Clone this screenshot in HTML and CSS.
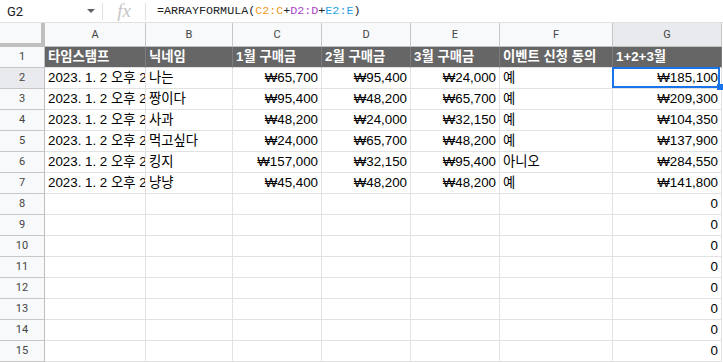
FILE: index.html
```html
<!DOCTYPE html>
<html>
<head>
  <title>Sheet</title>
  <link rel="stylesheet" href="styles.css">
</head>
<body>

  <div class="formula-bar">
    <div class="name-box"><span>G2</span><span class="caret"></span></div>
    <div class="sep"></div>
    <div class="fx">fx</div>
    <div class="sep"></div>
    <div class="formula">=ARRAYFORMULA(<span class="r1">C2:C</span>+<span class="r2">D2:D</span>+<span class="r3">E2:E</span>)</div>
  </div>

  <div class="sheet">
    <div class="corner"></div>
    <div class="col-head">A</div>
    <div class="col-head">B</div>
    <div class="col-head">C</div>
    <div class="col-head">D</div>
    <div class="col-head">E</div>
    <div class="col-head">F</div>
    <div class="col-head active">G</div>

    <div class="row-head">1</div>
    <div class="cell title">타임스탬프</div>
    <div class="cell title">닉네임</div>
    <div class="cell title">1월 구매금</div>
    <div class="cell title">2월 구매금</div>
    <div class="cell title">3월 구매금</div>
    <div class="cell title">이벤트 신청 동의</div>
    <div class="cell title">1+2+3월</div>

    <div class="row-head active">2</div>
    <div class="cell">2023. 1. 2 오후 2:10:21</div>
    <div class="cell">나는</div>
    <div class="cell num">₩65,700</div>
    <div class="cell num">₩95,400</div>
    <div class="cell num">₩24,000</div>
    <div class="cell">예</div>
    <div class="cell num selected">₩185,100</div>

    <div class="row-head">3</div>
    <div class="cell">2023. 1. 2 오후 2:11:05</div>
    <div class="cell">짱이다</div>
    <div class="cell num">₩95,400</div>
    <div class="cell num">₩48,200</div>
    <div class="cell num">₩65,700</div>
    <div class="cell">예</div>
    <div class="cell num">₩209,300</div>

    <div class="row-head">4</div>
    <div class="cell">2023. 1. 2 오후 2:11:48</div>
    <div class="cell">사과</div>
    <div class="cell num">₩48,200</div>
    <div class="cell num">₩24,000</div>
    <div class="cell num">₩32,150</div>
    <div class="cell">예</div>
    <div class="cell num">₩104,350</div>

    <div class="row-head">5</div>
    <div class="cell">2023. 1. 2 오후 2:12:30</div>
    <div class="cell">먹고싶다</div>
    <div class="cell num">₩24,000</div>
    <div class="cell num">₩65,700</div>
    <div class="cell num">₩48,200</div>
    <div class="cell">예</div>
    <div class="cell num">₩137,900</div>

    <div class="row-head">6</div>
    <div class="cell">2023. 1. 2 오후 2:13:12</div>
    <div class="cell">킹지</div>
    <div class="cell num">₩157,000</div>
    <div class="cell num">₩32,150</div>
    <div class="cell num">₩95,400</div>
    <div class="cell">아니오</div>
    <div class="cell num">₩284,550</div>

    <div class="row-head">7</div>
    <div class="cell">2023. 1. 2 오후 2:14:01</div>
    <div class="cell">냥냥</div>
    <div class="cell num">₩45,400</div>
    <div class="cell num">₩48,200</div>
    <div class="cell num">₩48,200</div>
    <div class="cell">예</div>
    <div class="cell num">₩141,800</div>

    <div class="row-head">8</div>
    <div class="cell"></div><div class="cell"></div><div class="cell"></div><div class="cell"></div><div class="cell"></div><div class="cell"></div>
    <div class="cell num">0</div>

    <div class="row-head">9</div>
    <div class="cell"></div><div class="cell"></div><div class="cell"></div><div class="cell"></div><div class="cell"></div><div class="cell"></div>
    <div class="cell num">0</div>

    <div class="row-head">10</div>
    <div class="cell"></div><div class="cell"></div><div class="cell"></div><div class="cell"></div><div class="cell"></div><div class="cell"></div>
    <div class="cell num">0</div>

    <div class="row-head">11</div>
    <div class="cell"></div><div class="cell"></div><div class="cell"></div><div class="cell"></div><div class="cell"></div><div class="cell"></div>
    <div class="cell num">0</div>

    <div class="row-head">12</div>
    <div class="cell"></div><div class="cell"></div><div class="cell"></div><div class="cell"></div><div class="cell"></div><div class="cell"></div>
    <div class="cell num">0</div>

    <div class="row-head">13</div>
    <div class="cell"></div><div class="cell"></div><div class="cell"></div><div class="cell"></div><div class="cell"></div><div class="cell"></div>
    <div class="cell num">0</div>

    <div class="row-head">14</div>
    <div class="cell"></div><div class="cell"></div><div class="cell"></div><div class="cell"></div><div class="cell"></div><div class="cell"></div>
    <div class="cell num">0</div>

    <div class="row-head">15</div>
    <div class="cell"></div><div class="cell"></div><div class="cell"></div><div class="cell"></div><div class="cell"></div><div class="cell"></div>
    <div class="cell num">0</div>
  </div>

</body>
</html>
```

FILE: styles.css
```css
body {
  margin: 0;
  background-color: white;
  color: black;
  font-family: "Liberation Sans", "Noto Sans CJK KR", Arial, sans-serif;
  font-size: 13.33px;
  overflow: hidden;
}

/* formula bar */
.formula-bar {
  display: flex;
  align-items: center;
  height: 22px;
  border-bottom: 1px solid #e1e1e1;
}

.name-box {
  width: 88px;
  padding: 0 7px;
  display: flex;
  align-items: center;
  justify-content: space-between;
  font-family: Roboto, "Liberation Sans", sans-serif;
  font-size: 13px;
  color: #202124;
}

.caret {
  width: 0;
  height: 0;
  border-left: 4px solid transparent;
  border-right: 4px solid transparent;
  border-top: 4px solid #5f6368;
}

.sep {
  width: 1px;
  height: 17px;
  background-color: #e0e0e0;
}

.fx {
  width: 42px;
  text-align: center;
  font-family: "Liberation Serif", serif;
  font-style: italic;
  font-size: 19px;
  line-height: 22px;
  color: #c6c6c6;
}

.formula {
  padding-left: 11px;
  font-family: "Liberation Mono", monospace;
  font-size: 11.7px;
  color: #202124;
}

.r1 { color: #f09a1e; }
.r2 { color: #a847c8; }
.r3 { color: #2b9fe4; }

/* grid */
.sheet {
  display: grid;
  grid-template-columns: 45px 101px 87px 89px 89px 89px 113px 109px;
  grid-template-rows: 24px;
  grid-auto-rows: 21px;
}

.sheet > div {
  box-sizing: border-box;
  white-space: nowrap;
  overflow: hidden;
}

.corner {
  background-color: #f8f9fa;
  border-right: 4px solid #bfbfbf;
  border-bottom: 4px solid #bfbfbf;
}

.col-head {
  background-color: #f8f9fa;
  border-right: 1px solid #c7c7c7;
  border-bottom: 1px solid #c0c0c0;
  text-align: center;
  line-height: 23px;
  font-family: Roboto, "Liberation Sans", sans-serif;
  font-size: 11px;
  color: #444;
}

.row-head {
  background-color: #f8f9fa;
  border-right: 1px solid #c0c0c0;
  border-bottom: 1px solid #c7c7c7;
  text-align: center;
  line-height: 20px;
  font-family: Roboto, "Liberation Sans", sans-serif;
  font-size: 11px;
  color: #444;
}

.col-head.active,
.row-head.active {
  background-color: #e8eaed;
}

.cell {
  border-right: 1px solid #e2e2e2;
  border-bottom: 1px solid #e2e2e2;
  padding: 0 3px;
  line-height: 20px;
}

.cell.num {
  text-align: right;
}

.cell.title {
  background-color: #666666;
  border-right-color: #7c7c7c;
  color: white;
  font-weight: bold;
}

.cell.selected {
  position: relative;
  overflow: visible;
}

.cell.selected::after {
  content: "";
  position: absolute;
  left: -1px;
  top: -1px;
  right: 1px;
  bottom: 0;
  border: 2px solid #1a73e8;
}

.cell.selected::before {
  content: "";
  position: absolute;
  right: -2px;
  bottom: -2px;
  width: 6px;
  height: 6px;
  background-color: #1a73e8;
  z-index: 2;
}
```
